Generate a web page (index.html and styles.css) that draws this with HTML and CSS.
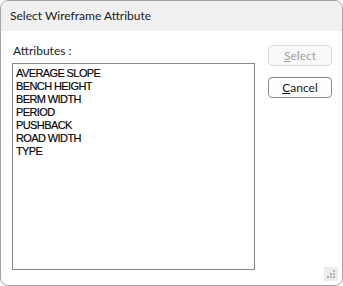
FILE: index.html
```html
<!DOCTYPE html>
<html lang="en">
<head>
  <meta charset="UTF-8" />
  <title>Select Wireframe Attribute</title>
  <link rel="stylesheet" href="styles.css">
</head>
<body>
  <div class="dialog">
    <div class="title-bar">Select Wireframe Attribute</div>
    <div class="dialog-body">
      <div class="list-col">
        <div class="list-label">Attributes :</div>
        <div class="list-box">
          <div class="list-item">AVERAGE SLOPE</div>
          <div class="list-item">BENCH HEIGHT</div>
          <div class="list-item">BERM WIDTH</div>
          <div class="list-item">PERIOD</div>
          <div class="list-item">PUSHBACK</div>
          <div class="list-item">ROAD WIDTH</div>
          <div class="list-item">TYPE</div>
        </div>
      </div>
      <div class="button-col">
        <button class="btn" disabled><u>S</u>elect</button>
        <button class="btn"><u>C</u>ancel</button>
      </div>
    </div>
    <div class="grip">
      <svg width="14" height="14" viewBox="0 0 14 14">
        <rect x="9" y="3" width="2" height="2" fill="#b4b4b4"/>
        <rect x="6" y="6" width="2" height="2" fill="#b4b4b4"/>
        <rect x="9" y="6" width="2" height="2" fill="#b4b4b4"/>
        <rect x="3" y="9" width="2" height="2" fill="#b4b4b4"/>
        <rect x="6" y="9" width="2" height="2" fill="#b4b4b4"/>
        <rect x="9" y="9" width="2" height="2" fill="#b4b4b4"/>
      </svg>
    </div>
  </div>
</body>
</html>
```

FILE: styles.css
```css
html, body {
  margin: 0;
  padding: 0;
  background: #ffffff;
}

.dialog {
  position: relative;
  width: 343px;
  height: 286px;
  box-sizing: border-box;
  border: 1px solid #a3a3a3;
  border-radius: 8px;
  overflow: hidden;
  background: #ffffff;
  font-family: Lato, "Noto Sans", sans-serif;
  font-size: 12px;
  color: #1a1a1a;
}

.title-bar {
  height: 30px;
  line-height: 29px;
  padding-left: 9px;
  background: #f0f0f0;
}

.dialog-body {
  display: flex;
  padding: 12px 10px 0 11px;
}

.list-col {
  width: 243px;
}

.list-label {
  height: 20px;
  line-height: 16px;
  padding-left: 1px;
}

.list-box {
  height: 207px;
  box-sizing: border-box;
  border: 1px solid #828790;
  padding: 3px 0 0 3px;
  font-family: "Liberation Sans", Arial, sans-serif;
  font-size: 11px;
  letter-spacing: -0.6px;
  -webkit-text-stroke: 0.15px #000000;
  color: #000000;
}

.list-item {
  height: 13px;
  line-height: 13px;
}

.button-col {
  display: flex;
  flex-direction: column;
  gap: 11px;
  margin-left: 13px;
  padding-top: 2px;
}

.btn {
  width: 64px;
  height: 21px;
  padding: 0;
  box-sizing: border-box;
  border: 1px solid #8a8a8a;
  border-radius: 4px;
  background: #fdfdfd;
  font-family: Lato, "Noto Sans", sans-serif;
  font-size: 12px;
  color: #1a1a1a;
}

.btn:disabled {
  border-color: #dcdcdc;
  background: #f9f9f9;
  color: #a0a0a0;
}

.grip {
  position: absolute;
  right: 4px;
  bottom: 4px;
  width: 14px;
  height: 14px;
  background: #ececec;
}

.grip svg {
  display: block;
}
```
